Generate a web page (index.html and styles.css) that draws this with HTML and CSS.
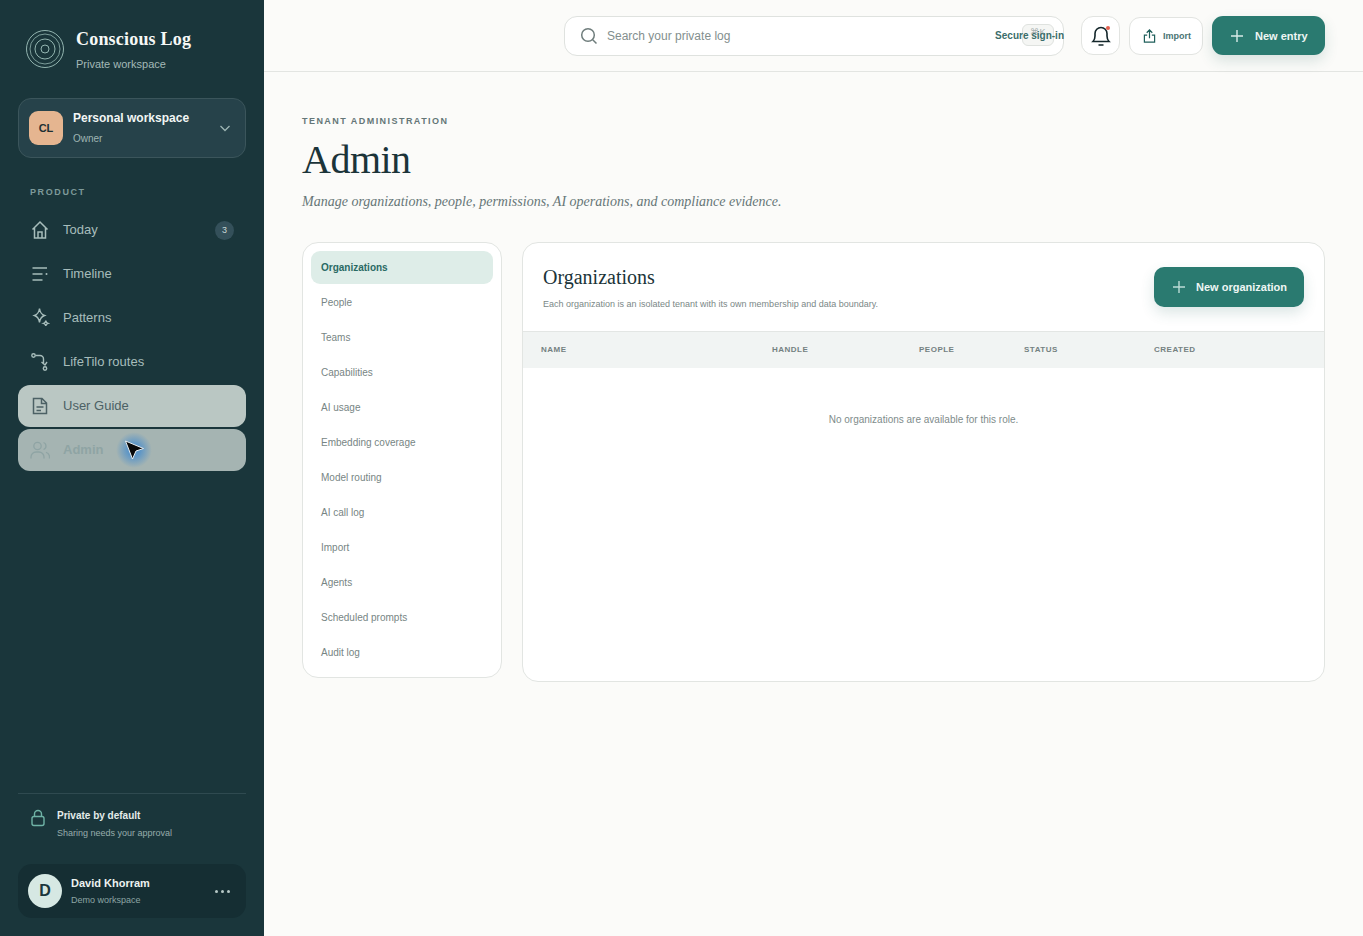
FILE: index.html
```html
<!DOCTYPE html>
<html lang="en">
<head>
  <meta charset="utf-8">
  <title>Admin - Conscious Log</title>
  <link rel="stylesheet" href="styles.css">
</head>
<body>
  <div class="app">
    <aside class="sidebar">
      <div class="brand">
        <svg class="brand-mark" width="38" height="38" viewBox="0 0 38 38" fill="none" stroke="#93b5b0" stroke-width="1">
          <circle cx="19" cy="19" r="18.500"/>
          <circle cx="19" cy="19" r="15" stroke-opacity=".8"/>
          <circle cx="19" cy="19" r="10"/>
          <circle cx="19" cy="19" r="4"/>
        </svg>
        <div>
          <div class="brand-name">Conscious Log</div>
          <div class="brand-sub">Private workspace</div>
        </div>
      </div>

      <div class="workspace">
        <div class="workspace-avatar">CL</div>
        <div class="workspace-text">
          <div class="workspace-name">Personal workspace</div>
          <div class="workspace-role">Owner</div>
        </div>
        <svg width="14" height="14" viewBox="0 0 14 14" fill="none" stroke="#9db5b3" stroke-width="1.300"><path d="M2.500 5l4.500 4.500L11.500 5"/></svg>
      </div>

      <div class="nav-label">PRODUCT</div>
      <nav class="nav">
        <a class="nav-item">
          <svg width="20" height="20" viewBox="0 0 20 20" fill="none" stroke="currentColor" stroke-width="1.500"><path d="M2.500 9.500L10 2l7.500 7.500M4.500 7.500V18h11V7.500M8 18v-6h4v6"/></svg>
          <span>Today</span><b class="badge">3</b>
        </a>
        <a class="nav-item">
          <svg width="20" height="20" viewBox="0 0 20 20" fill="none" stroke="currentColor" stroke-width="1.600"><path d="M2.500 4h14.500M2.500 10h10M2.500 16h10"/><circle cx="16.500" cy="10" r="1" fill="currentColor" stroke="none"/></svg>
          <span>Timeline</span>
        </a>
        <a class="nav-item">
          <svg width="20" height="20" viewBox="0 0 20 20" fill="none" stroke="currentColor" stroke-width="1.400"><path d="M9.500 .5c.6 4.500 2 6 5 7-3 1-4.400 2.500-5 7-.6-4.500-2-6-5-7 3-1 4.400-2.500 5-7z"/><path d="M15.800 12.500c.2 1.700.8 2.400 2.200 2.800-1.400.4-2 1.100-2.200 2.700-.2-1.600-.8-2.300-2.200-2.700 1.400-.4 2-1.100 2.200-2.800z"/></svg>
          <span>Patterns</span>
        </a>
        <a class="nav-item">
          <svg width="20" height="20" viewBox="0 0 20 20" fill="none" stroke="currentColor" stroke-width="1.400"><circle cx="3.500" cy="3.500" r="1.700"/><circle cx="15" cy="16.500" r="1.700"/><path d="M5.500 3.500H10a3.500 3.500 0 0 1 3.500 3.500v4.500M11.500 10l3.500 3 2-3"/></svg>
          <span>LifeTilo routes</span>
        </a>
        <a class="nav-item nav-guide">
          <svg width="20" height="20" viewBox="0 0 20 20" fill="none" stroke="currentColor" stroke-width="1.500"><path d="M3.500 2.500h8.500l4.500 4.500v10.500h-13zM11.500 2.500v5h5M6.500 11h7M6.500 14.500h4.500"/></svg>
          <span>User Guide</span>
        </a>
        <a class="nav-item nav-admin">
          <svg width="20" height="20" viewBox="0 0 20 20" fill="none" stroke="currentColor" stroke-width="1.300"><circle cx="7.500" cy="6" r="3.700"/><path d="M1 18.500v-1.500a5 5 0 0 1 5-5h3a5 5 0 0 1 5 5v1.500M13.500 2.500a3.700 3.700 0 0 1 0 7M16 12.300a5 5 0 0 1 3.500 4.700v1.500"/></svg>
          <span>Admin</span>
          <span class="cursor">
            <svg width="22" height="22" viewBox="0 0 22 22"><path d="M2.500 2l18 7.500-7.500 2.500-3.500 8z" fill="#08090b" stroke="#e8eef2" stroke-width="1" stroke-linejoin="round"/></svg>
          </span>
        </a>
      </nav>

      <div class="privacy">
        <svg width="16" height="18" viewBox="0 0 16 18" fill="none" stroke="#6fb3a6" stroke-width="1.400"><rect x="2" y="7.500" width="12" height="9" rx="2"/><path d="M4.500 7.500V5a3.500 3.500 0 0 1 7 0v2.500"/></svg>
        <div>
          <div class="privacy-title">Private by default</div>
          <div class="privacy-sub">Sharing needs your approval</div>
        </div>
      </div>

      <div class="user">
        <div class="user-avatar">D</div>
        <div class="user-text">
          <div class="user-name">David Khorram</div>
          <div class="user-sub">Demo workspace</div>
        </div>
        <div class="user-more"><i></i><i></i><i></i></div>
      </div>
    </aside>

    <div class="content">
      <header class="topbar">
        <div class="search">
          <svg width="18" height="18" viewBox="0 0 18 18" fill="none" stroke="#6f7d7c" stroke-width="1.500"><circle cx="8" cy="8" r="6.300"/><path d="M12.700 12.700L16.500 16.500"/></svg>
          <span class="search-hint">Search your private log</span>
          <kbd class="search-key">⌘K</kbd>
          <span class="secure">Secure sign-in</span>
        </div>
        <button class="icon-btn">
          <svg width="20" height="22" viewBox="0 0 20 22" fill="none" stroke="#13262a" stroke-width="1.600"><path d="M2 16.500c1.500-1.500 2-3 2-5.500V8.500a6 6 0 0 1 12 0V11c0 2.500.5 4 2 5.500zM7.500 20h5"/></svg>
          <i class="dot"></i>
        </button>
        <button class="import-btn">
          <svg width="13" height="14" viewBox="0 0 14 15" fill="none" stroke="#1f5f5b" stroke-width="1.300"><path d="M7 10V1.500M4 4l3-3 3 3M4.500 6.500H1.500v7.500h11V6.500h-3"/></svg>
          <span>Import</span>
        </button>
        <button class="primary-btn entry-btn">
          <svg width="14" height="14" viewBox="0 0 14 14" stroke="#d8ece8" stroke-width="1.400"><path d="M7 1v12M1 7h12"/></svg>
          <span>New entry</span>
        </button>
      </header>

      <main class="main">
        <div class="eyebrow">TENANT ADMINISTRATION</div>
        <h1 class="title">Admin</h1>
        <p class="subtitle">Manage organizations, people, permissions, AI operations, and compliance evidence.</p>

        <div class="columns">
          <ul class="side-menu">
            <li class="current">Organizations</li>
            <li>People</li>
            <li>Teams</li>
            <li>Capabilities</li>
            <li>AI usage</li>
            <li>Embedding coverage</li>
            <li>Model routing</li>
            <li>AI call log</li>
            <li>Import</li>
            <li>Agents</li>
            <li>Scheduled prompts</li>
            <li>Audit log</li>
          </ul>

          <section class="panel">
            <div class="panel-head">
              <div>
                <h2 class="panel-title">Organizations</h2>
                <p class="panel-sub">Each organization is an isolated tenant with its own membership and data boundary.</p>
              </div>
              <button class="primary-btn org-btn">
                <svg width="14" height="14" viewBox="0 0 14 14" stroke="#bcdcd6" stroke-width="1.400"><path d="M7 1v12M1 7h12"/></svg>
                <span>New organization</span>
              </button>
            </div>
            <div class="table-head">
              <span>NAME</span><span>HANDLE</span><span>PEOPLE</span><span>STATUS</span><span>CREATED</span>
            </div>
            <div class="table-empty">No organizations are available for this role.</div>
          </section>
        </div>
      </main>
    </div>
  </div>
</body>
</html>
```

FILE: styles.css
```css
html,
body,
ul,
h1,
h2,
p {
  margin: 0;
  padding: 0;
}
body {
  font-family: "Liberation Sans", Arial, sans-serif;
  background: #fbfbf9;
  color: #17292d;
}
button {
  font-family: inherit;
  cursor: pointer;
}
.app {
  display: flex;
  height: 936px;
  overflow: hidden;
}

/* sidebar */
.sidebar {
  width: 264px;
  flex: none;
  box-sizing: border-box;
  padding: 26px 18px 18px;
  background: #1a363b;
  display: flex;
  flex-direction: column;
}
.brand {
  display: flex;
  gap: 12px;
  padding-left: 8px;
  height: 46px;
}
.brand-mark {
  margin-top: 4px;
}
.brand-name {
  font-family: "Liberation Serif", serif;
  font-weight: 700;
  font-size: 18px;
  line-height: 26px;
  color: #f6f8f6;
  letter-spacing: .2px;
}
.brand-sub {
  margin-top: 5px;
  font-size: 11px;
  line-height: 14px;
  color: #a4b9b7;
}
.workspace {
  margin-top: 26px;
  height: 60px;
  box-sizing: border-box;
  padding: 0 13px 0 10px;
  display: flex;
  align-items: center;
  gap: 10px;
  background: #26424a;
  border: 1px solid #3b555b;
  border-radius: 13px;
}
.workspace-avatar {
  width: 34px;
  height: 34px;
  border-radius: 9px;
  background: #e5b590;
  color: #1d2f33;
  font-size: 11px;
  font-weight: 700;
  display: flex;
  align-items: center;
  justify-content: center;
}
.workspace-text {
  flex: 1;
  padding-bottom: 1px;
}
.workspace-name {
  font-size: 12px;
  line-height: 14px;
  font-weight: 700;
  color: #f2f6f5;
}
.workspace-role {
  margin-top: 8px;
  font-size: 10px;
  line-height: 12px;
  color: #9fb4b3;
}
.nav-label {
  margin: 28px 0 0 12px;
  font-size: 9px;
  line-height: 12px;
  font-weight: 700;
  letter-spacing: 1.600px;
  color: #7e9a9a;
}
.nav {
  margin-top: 11px;
  display: flex;
  flex-direction: column;
  gap: 2px;
}
.nav-item {
  position: relative;
  height: 42px;
  padding: 0 12px;
  display: flex;
  align-items: center;
  gap: 13px;
  font-size: 13px;
  color: #a7bdbb;
  border-radius: 12px;
}
.nav-item > span:nth-child(2) {
  flex: 1;
  padding-bottom: 2px;
}
.badge {
  width: 19px;
  height: 19px;
  border-radius: 50%;
  background: #34505a;
  color: #c9d8d7;
  font-size: 9px;
  font-weight: 400;
  display: flex;
  align-items: center;
  justify-content: center;
}
.nav-guide {
  background: #bac7c3;
  color: #4c6165;
}
.nav-admin {
  background: #a5b4b2;
  color: #8fa4a4;
  font-weight: 700;
}
.cursor {
  position: absolute;
  left: 98px;
  top: 3px;
  width: 36px;
  height: 36px;
  background: radial-gradient(circle, rgba(70, 140, 205, .75) 25%, rgba(90, 150, 200, 0) 70%);
  display: flex;
  align-items: center;
  justify-content: center;
}
.privacy {
  margin-top: auto;
  height: 71px;
  box-sizing: border-box;
  border-top: 1px solid #2f4a50;
  padding: 15px 0 0 12px;
  display: flex;
  gap: 11px;
}
.privacy-title {
  font-size: 10px;
  line-height: 14px;
  font-weight: 700;
  color: #e4ecea;
}
.privacy-sub {
  margin-top: 4px;
  font-size: 9px;
  line-height: 12px;
  color: #97adab;
}
.user {
  height: 54px;
  box-sizing: border-box;
  padding: 0 16px 0 10px;
  display: flex;
  align-items: center;
  gap: 9px;
  background: #152e33;
  border-radius: 14px;
}
.user-avatar {
  width: 34px;
  height: 34px;
  border-radius: 50%;
  background: #d6e8e3;
  color: #1b363c;
  font-size: 16px;
  font-weight: 700;
  display: flex;
  align-items: center;
  justify-content: center;
}
.user-text {
  flex: 1;
  padding-bottom: 1px;
}
.user-name {
  font-size: 11px;
  line-height: 14px;
  font-weight: 700;
  color: #ecf2f0;
}
.user-sub {
  margin-top: 4px;
  font-size: 9px;
  line-height: 12px;
  color: #8da5a3;
}
.user-more {
  display: flex;
  gap: 3px;
}
.user-more i {
  width: 3px;
  height: 3px;
  border-radius: 50%;
  background: #b6c8c6;
}

/* topbar */
.content {
  flex: 1;
  min-width: 0;
}
.topbar {
  height: 72px;
  box-sizing: border-box;
  border-bottom: 1px solid #e3e5e2;
  padding: 16px 38px 0 300px;
  display: flex;
  align-items: flex-start;
}
.search {
  position: relative;
  width: 500px;
  height: 40px;
  box-sizing: border-box;
  padding-left: 15px;
  display: flex;
  align-items: center;
  gap: 9px;
  background: #fff;
  border: 1px solid #dfe2df;
  border-radius: 13px;
}
.search-hint {
  font-size: 12px;
  color: #838f8e;
}
.search-key {
  position: absolute;
  right: 9px;
  top: 7px;
  width: 32px;
  height: 22px;
  box-sizing: border-box;
  border: 1px solid #dfe2df;
  border-radius: 6px;
  background: #f5f6f4;
  font-family: inherit;
  font-size: 9px;
  line-height: 14px;
  text-align: center;
  color: #a5afae;
}
.secure {
  position: absolute;
  right: -1px;
  top: 12px;
  font-size: 10px;
  line-height: 14px;
  font-weight: 700;
  color: #3a6d6a;
}
.icon-btn {
  position: relative;
  margin-left: 17px;
  width: 39px;
  height: 39px;
  padding: 0;
  background: #fff;
  border: 1px solid #e2e4e1;
  border-radius: 12px;
  display: flex;
  align-items: center;
  justify-content: center;
}
.dot {
  position: absolute;
  right: 9px;
  top: 9px;
  width: 4px;
  height: 4px;
  border-radius: 50%;
  background: #e4604f;
}
.import-btn {
  margin: 1px 0 0 9px;
  width: 74px;
  height: 38px;
  padding: 0 0 0 13px;
  background: #fff;
  border: 1px solid #e2e4e1;
  border-radius: 11px;
  display: flex;
  align-items: center;
  gap: 7px;
  font-size: 9px;
  font-weight: 700;
  color: #4a7473;
}
.primary-btn {
  border: 0;
  background: #2a7a70;
  color: #eef6f4;
  font-weight: 700;
  display: flex;
  align-items: center;
  box-shadow: 0 6px 14px rgba(35, 100, 95, .16);
}
.entry-btn {
  margin-left: 9px;
  width: 113px;
  height: 39px;
  padding: 0 0 0 18px;
  gap: 11px;
  font-size: 11px;
  border-radius: 11px;
}

/* main */
.main {
  padding: 43px 38px 0;
}
.eyebrow {
  font-size: 9px;
  line-height: 12px;
  font-weight: 700;
  letter-spacing: 1.450px;
  color: #647677;
}
.title {
  margin-top: 9px;
  font-family: "Liberation Serif", serif;
  font-weight: 400;
  font-size: 40px;
  line-height: 48px;
  letter-spacing: -.5px;
  color: #1b3439;
}
.subtitle {
  margin-top: 8px;
  font-family: "Liberation Serif", serif;
  font-style: italic;
  font-size: 14px;
  line-height: 20px;
  color: #667677;
}
.columns {
  margin-top: 30px;
  display: flex;
  align-items: flex-start;
  gap: 20px;
}
.side-menu {
  list-style-type: none;
  width: 200px;
  height: 436px;
  box-sizing: border-box;
  padding: 8px;
  display: flex;
  flex-direction: column;
  gap: 2px;
  background: #fff;
  border: 1px solid #e2e5e2;
  border-radius: 16px;
}
.side-menu li {
  height: 33px;
  line-height: 33px;
  padding-left: 10px;
  font-size: 10px;
  color: #778584;
  border-radius: 9px;
}
.side-menu .current {
  background: #deede8;
  color: #2a6a64;
  font-weight: 700;
}
.panel {
  flex: 1;
  height: 440px;
  box-sizing: border-box;
  background: #fff;
  border: 1px solid #e2e5e2;
  border-radius: 16px;
  overflow: hidden;
}
.panel-head {
  height: 88px;
  box-sizing: border-box;
  padding: 23px 20px 0;
  display: flex;
  justify-content: space-between;
  align-items: flex-start;
}
.panel-title {
  font-family: "Liberation Serif", serif;
  font-weight: 400;
  font-size: 20px;
  line-height: 22px;
  color: #1b3439;
}
.panel-sub {
  margin-top: 10px;
  font-size: 9px;
  line-height: 12px;
  color: #7b8887;
}
.org-btn {
  margin-top: 1px;
  width: 150px;
  height: 40px;
  padding: 0 0 0 18px;
  gap: 10px;
  font-size: 11px;
  border-radius: 10px;
}
.table-head {
  height: 37px;
  box-sizing: border-box;
  border-top: 1px solid #e3e6e4;
  background: #f1f4f3;
  padding: 0 0 2px 18px;
  display: grid;
  grid-template-columns: 231px 147px 105px 130px 1fr;
  align-items: center;
  font-size: 8px;
  font-weight: 700;
  letter-spacing: .5px;
  color: #748181;
}
.table-empty {
  margin-top: 45px;
  text-align: center;
  font-size: 10px;
  line-height: 14px;
  color: #808c8b;
}
```
